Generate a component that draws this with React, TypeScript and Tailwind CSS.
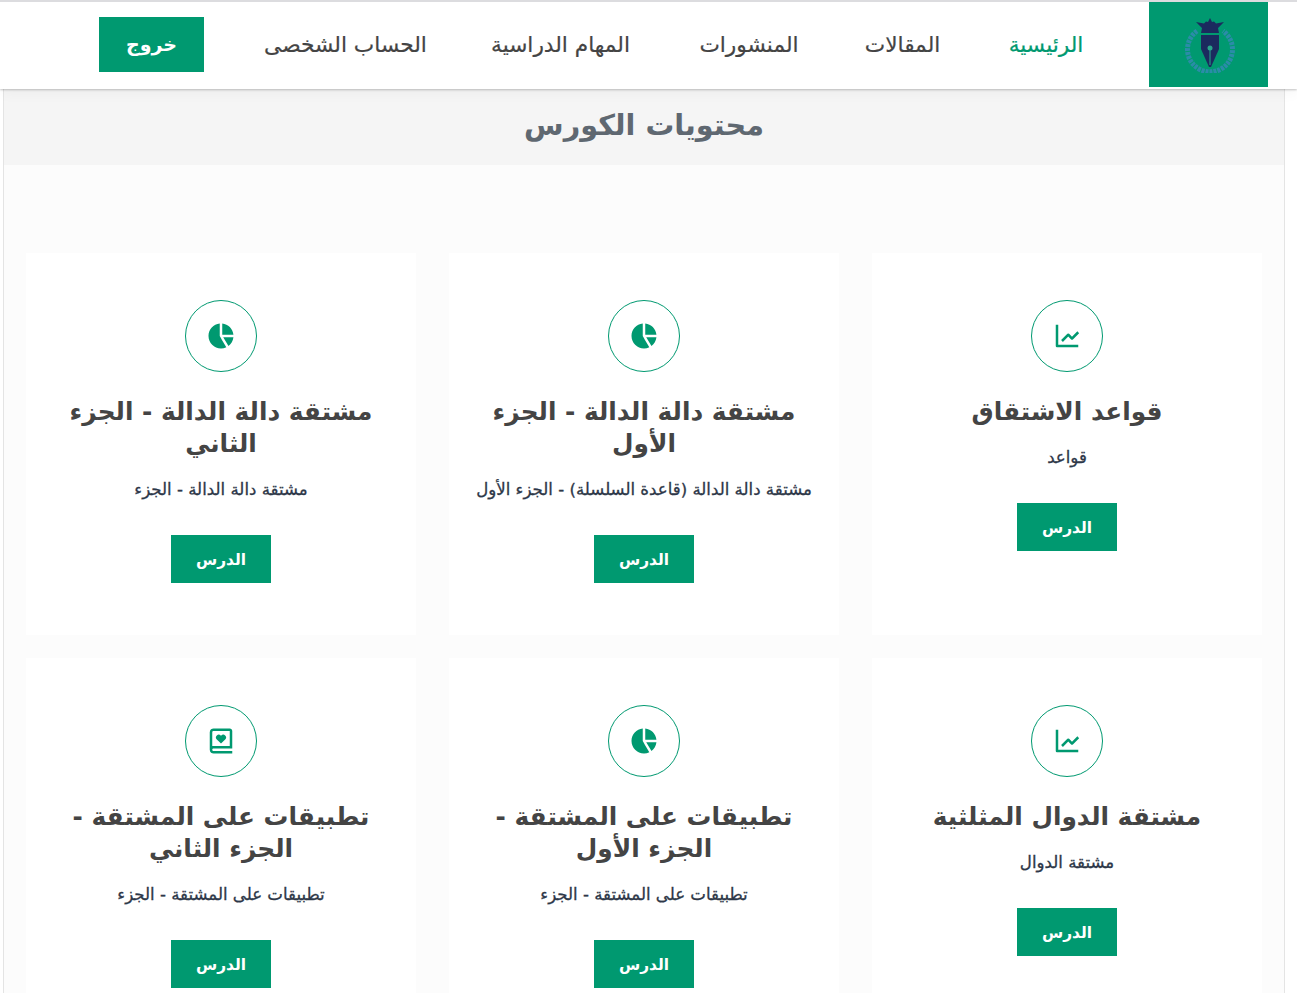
import React from "react";
import { BiLineChart, BiSolidPieChartAlt2, BiBookHeart } from "react-icons/bi";

const nav = [
  { t: "الرئيسية", w: "w-[78px]" },
  { t: "المقالات", w: "w-[77px]" },
  { t: "المنشورات", w: "w-[98px]" },
  { t: "المهام الدراسية", w: "w-[147px]" },
  { t: "الحساب الشخصى", w: "w-[151px]" },
];

type Card = { icon: "line" | "pie" | "book"; title: string; sub: string };
const cards: Card[] = [
  { icon: "line", title: "قواعد الاشتقاق", sub: "قواعد" },
  { icon: "pie", title: "مشتقة دالة الدالة - الجزء الأول", sub: "مشتقة دالة الدالة (قاعدة السلسلة) - الجزء الأول" },
  { icon: "pie", title: "مشتقة دالة الدالة - الجزء الثاني", sub: "مشتقة دالة الدالة - الجزء" },
  { icon: "line", title: "مشتقة الدوال المثلثية", sub: "مشتقة الدوال" },
  { icon: "pie", title: "تطبيقات على المشتقة - الجزء الأول", sub: "تطبيقات على المشتقة - الجزء" },
  { icon: "book", title: "تطبيقات على المشتقة - الجزء الثاني", sub: "تطبيقات على المشتقة - الجزء" },
];

function Icon({ k }: { k: Card["icon"] }) {
  const c = "text-[#009970] text-[30px]";
  if (k === "line") return <BiLineChart className={c} />;
  if (k === "pie") return <BiSolidPieChartAlt2 className={c} />;
  return <BiBookHeart className={c} />;
}

function Logo() {
  return (
    <svg width="52" height="56" viewBox="0 0 52 56">
      <path d="M13 14 A22.5 22.5 0 1 0 39 14" fill="none" stroke="#2b8ca8" strokeWidth="5" strokeDasharray="3 1" />
      <path d="M12 5 L20 6.5 L22 4.5 L24 5 L26 1 L28 5 L30 4.5 L32 6.5 L40 5 L34 11 L35 16 L17 16 L18 11 Z" fill="#1b2a5e" />
      <path d="M17 18 H35 V32 L27 50 H25 L17 32 Z" fill="#1b2a5e" />
      <circle cx="26" cy="31" r="2.5" fill="#2aa58a" />
      <path d="M25.5 32 h1 v16 h-1 z" fill="#2aa58a" />
    </svg>
  );
}

export default function App() {
  return (
    <div dir="rtl" className="h-[993px] overflow-hidden bg-white font-['DejaVu_Sans',sans-serif]">
      <header className="h-[89px] bg-white border-t-2 border-[#dcdcdf] shadow-[0_1px_2px_rgba(0,0,0,0.22),0_2px_15px_rgba(0,0,0,0.05)] relative z-10 flex items-start pr-[29px]">
        <div className="w-[119px] h-[85px] bg-[#009970] flex items-center justify-center pl-[3px]">
          <Logo />
        </div>
        <nav className="flex gap-[66px] mr-[64px] mt-[26px] text-[21.7px] leading-[34px] [-webkit-text-stroke:0.2px] text-[#444444]">
          {nav.map((n, i) => (
            <span key={n.t} className={`${n.w} flex justify-center whitespace-nowrap ${i === 0 ? "text-[#009970]" : ""}`}>{n.t}</span>
          ))}
        </nav>
        <div className="mr-[66px] mt-[15px] w-[105px] h-[55px] bg-[#009970] text-white text-[19px] font-bold flex items-center justify-center">خروج</div>
      </header>
      <main className="ml-[3px] mr-[12px] border-x border-[#e4e4e4] bg-[#fcfcfc]">
        <div className="h-[76px] pb-[2px] bg-[#f5f5f5] flex items-center justify-center text-[#5f6871] text-[28.7px] font-bold">محتويات الكورس</div>
        <div className="grid grid-cols-3 gap-x-[33px] gap-y-[23px] pt-[88px] px-[22px]">
          {cards.map((c, i) => (
            <div key={i} className="bg-white pt-[47px] pb-[52px] px-[20px] flex flex-col items-center text-center">
              <div className="w-[72px] h-[72px] rounded-full border border-[#009970] flex items-center justify-center"><Icon k={c.icon} /></div>
              <h3 className="mt-[24px] text-[24.8px] leading-[32px] font-bold text-[#444444]">{c.title}</h3>
              <p className="mt-[18px] text-[16.6px] leading-[24px] [-webkit-text-stroke:0.3px] text-[#2d3748]">{c.sub}</p>
              <div className="mt-[33px] w-[100px] h-[48px] pt-[3px] bg-[#009970] text-white text-[15.4px] font-bold flex items-center justify-center">الدرس</div>
            </div>
          ))}
        </div>
      </main>
    </div>
  );
}
